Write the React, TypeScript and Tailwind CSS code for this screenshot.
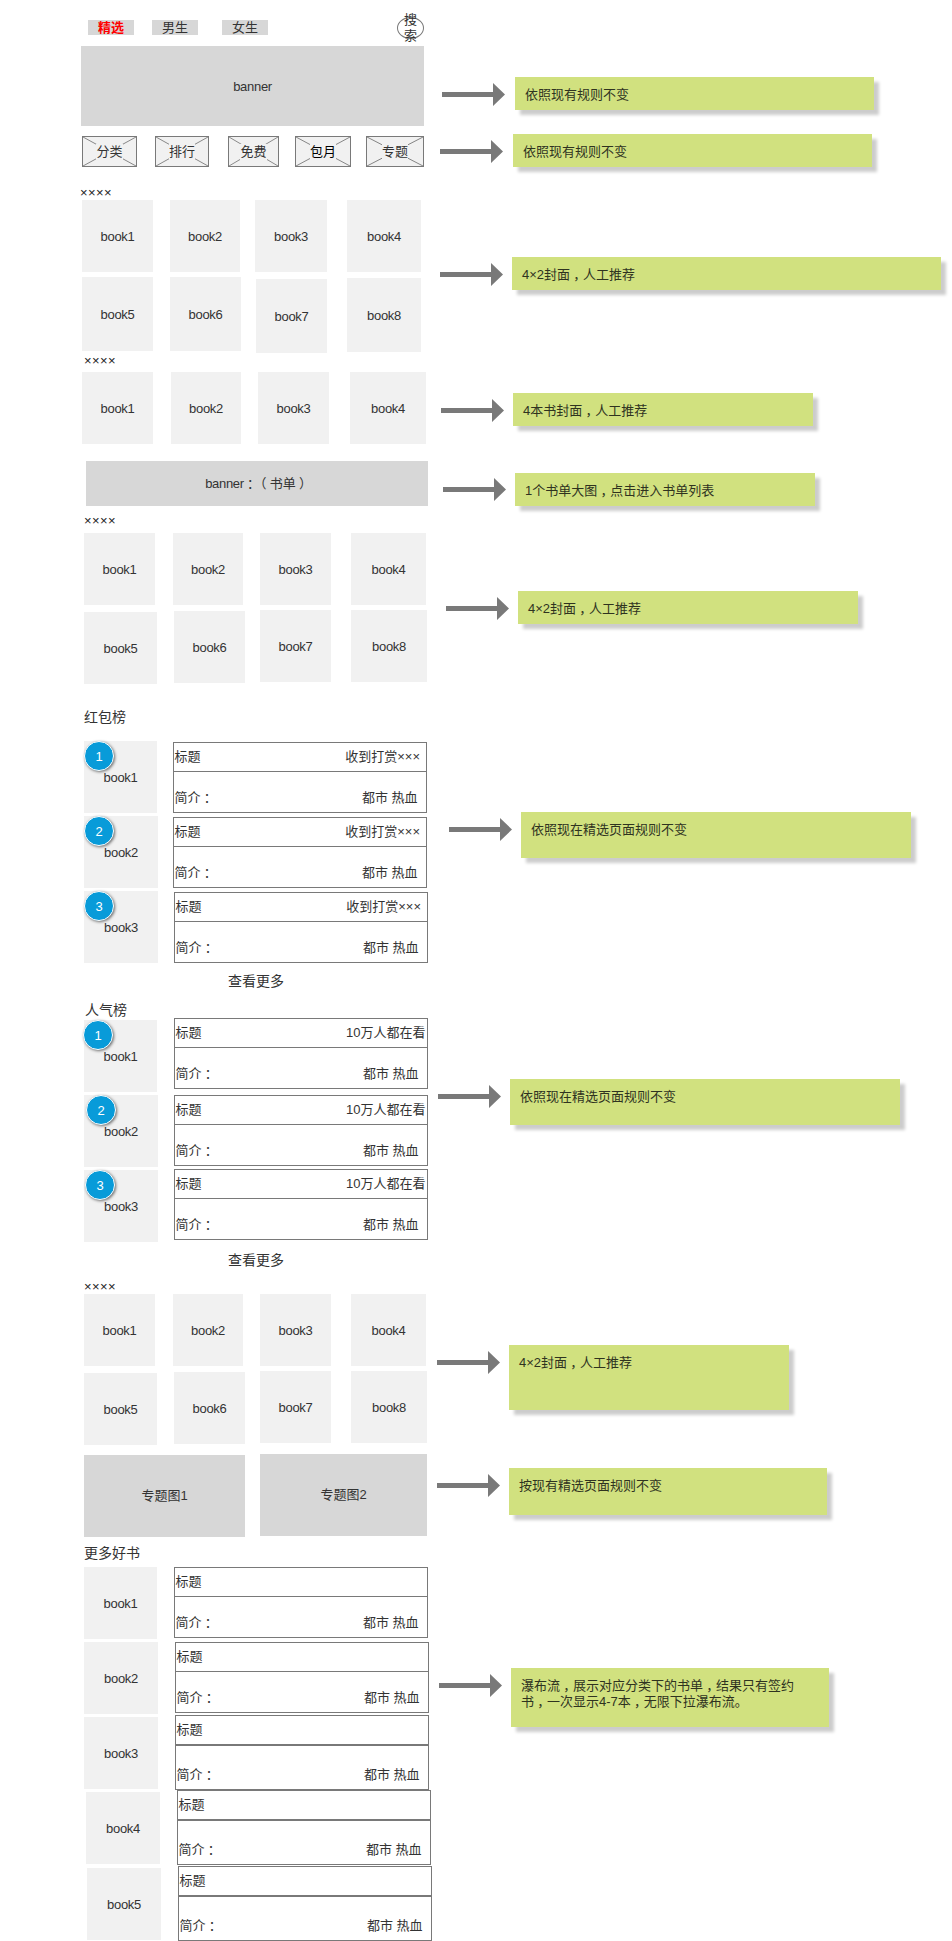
import React from "react";

type Item = { label: string; box: string };

/* Punctuation sits in the middle of its full-width cell. */
function T({ children }: { children: string }) {
  return (
    <>
      {children.split(/([，：（）])/).map((part, i) =>
        /^[，：（）]$/.test(part) ? (
          <span key={i} className="inline-block w-[13px] text-center [font-feature-settings:'halt']">{part}</span>
        ) : (
          <React.Fragment key={i}>{part}</React.Fragment>
        ),
      )}
    </>
  );
}

function Arrow() {
  return (
    <svg width="63" height="23" viewBox="0 0 63 23" className="shrink-0" fill="#797979">
      <path d="M0 9H51V0L63 11.5L51 23V14H0Z" />
    </svg>
  );
}

const notes = [
  { row: "mt-[77px] ml-[5px]", arrow: "mt-[6px] mr-[10px]", box: "w-[359px] h-[33px]", lines: ["依照现有规则不变"] },
  { row: "mt-[24px] ml-[3px]", arrow: "mt-[6px] mr-[10px]", box: "w-[359px] h-[33px]", lines: ["依照现有规则不变"] },
  { row: "mt-[90px] ml-[3px]", arrow: "mt-[6px] mr-[9px]", box: "w-[429px] h-[33px]", lines: ["4×2封面，人工推荐"] },
  { row: "mt-[103px] ml-[4px]", arrow: "mt-[6px] mr-[9px]", box: "w-[300px] h-[33px]", lines: ["4本书封面，人工推荐"] },
  { row: "mt-[47px] ml-[6px]", arrow: "mt-[5px] mr-[9px]", box: "w-[300px] h-[33px]", lines: ["1个书单大图，点击进入书单列表"] },
  { row: "mt-[85px] ml-[9px]", arrow: "mt-[6px] mr-[9px]", box: "w-[340px] h-[33px]", lines: ["4×2封面，人工推荐"] },
  { row: "mt-[188px] ml-[12px]", arrow: "mt-[6px] mr-[9px]", box: "w-[390px] h-[46px]", lines: ["依照现在精选页面规则不变"] },
  { row: "mt-[221px] ml-[1px]", arrow: "mt-[6px] mr-[9px]", box: "w-[390px] h-[46px]", lines: ["依照现在精选页面规则不变"] },
  { row: "mt-[220px] ml-0", arrow: "mt-[6px] mr-[9px]", box: "w-[280px] h-[65px]", lines: ["4×2封面，人工推荐"] },
  { row: "mt-[58px] ml-0", arrow: "mt-[6px] mr-[9px]", box: "w-[318px] h-[47px]", lines: ["按现有精选页面规则不变"] },
  {
    row: "mt-[153px] ml-[2px]",
    arrow: "mt-[6px] mr-[9px]",
    box: "w-[318px] h-[59px]",
    lines: ["瀑布流，展示对应分类下的书单，结果只有签约", "书，一次显示4-7本，无限下拉瀑布流。"],
  },
];

function Notes() {
  return (
    <aside className="flex w-[515px] shrink-0 flex-col">
      {notes.map((n, i) => (
        <div key={i} className={`flex items-start ${n.row}`}>
          <div className={`shrink-0 ${n.arrow}`}><Arrow /></div>
          <div className={`shrink-0 bg-[#d1e17f] pt-[10px] pl-[10px] shadow-[5px_5px_3px_rgba(0,0,0,0.2)] ${n.box}`}>
            {n.lines.map((l) => (
              <p key={l} className="h-4 whitespace-nowrap text-[#2f331f]"><T>{l}</T></p>
            ))}
          </div>
        </div>
      ))}
    </aside>
  );
}

function Books({ items, className }: { items: Item[]; className: string }) {
  return (
    <div className={`flex items-start ${className}`}>
      {items.map((b) => (
        <div key={b.label} className={`flex shrink-0 items-center justify-center bg-[#f1f1f1] pt-[2px] tracking-[-0.3px] ${b.box}`}>{b.label}</div>
      ))}
    </div>
  );
}

function Marks({ className }: { className: string }) {
  return <div className={`h-4 pt-px tracking-[0.4px] text-[#1c1c1c] ${className}`}>××××</div>;
}

const shelfTop: Item[] = [
  { label: "book1", box: "ml-[84px] w-[71px] h-[72px]" },
  { label: "book2", box: "ml-[18px] w-[70px] h-[72px]" },
  { label: "book3", box: "ml-[17px] w-[71px] h-[72px]" },
  { label: "book4", box: "ml-[20px] w-[75px] h-[72px]" },
];
const shelfBottom: Item[] = [
  { label: "book5", box: "ml-[84px] mt-[2px] w-[73px] h-[72px]" },
  { label: "book6", box: "ml-[17px] mt-[1px] w-[71px] h-[72px]" },
  { label: "book7", box: "ml-[15px] w-[71px] h-[72px]" },
  { label: "book8", box: "ml-[20px] w-[76px] h-[72px]" },
];

type Entry = {
  n: string;
  row: string;
  cover: string;
  badge?: string;
  card: string;
  right?: string;
  rightPad?: string;
  tall?: boolean;
};

function EntryRow({ e }: { e: Entry }) {
  return (
    <div className={`flex shrink-0 items-start ${e.row}`}>
      <div className={`relative flex h-[72px] shrink-0 items-center justify-center bg-[#f1f1f1] pt-[2px] tracking-[-0.3px] ${e.cover}`}>
        book{e.n}
        {e.badge && (
          <span className={`absolute top-0 flex size-[30px] items-center justify-center rounded-full border border-white bg-[#089bd9] pt-px text-white shadow-[1px_1px_3px_rgba(0,0,0,0.55)] ${e.badge}`}>
            {e.n}
          </span>
        )}
      </div>
      <div className={`flex w-[254px] shrink-0 flex-col border border-[#797979] ${e.tall ? "h-[75px]" : "h-[71px]"} ${e.card}`}>
        <div className={`flex shrink-0 items-center justify-between border-[#797979] pl-[0.5px] ${e.tall ? "h-[30px] border-b-2" : "h-[29px] border-b"} ${e.rightPad ?? ""}`}>
          <span>标题</span>
          <span>{e.right}</span>
        </div>
        <div className="flex grow items-end justify-between pr-[8.5px] pb-[6px] pl-[0.5px]">
          <span><T>简介：</T></span>
          <span>都市 热血</span>
        </div>
      </div>
    </div>
  );
}

const reward: Entry[] = [
  { n: "1", row: "mt-[16px] h-[72px]", cover: "ml-[84px] w-[73px]", badge: "left-0", card: "ml-[16px] mt-px", right: "收到打赏×××", rightPad: "pr-[6px]" },
  { n: "2", row: "mt-[3px] h-[72px]", cover: "ml-[84px] w-[74px]", badge: "left-0", card: "ml-[15px] mt-px", right: "收到打赏×××", rightPad: "pr-[6px]" },
  { n: "3", row: "mt-[3px] h-[72px]", cover: "ml-[84px] w-[74px]", badge: "left-0", card: "ml-[16px] mt-px", right: "收到打赏×××", rightPad: "pr-[6px]" },
];
const popular: Entry[] = [
  { n: "1", row: "mt-[2px] h-[72px]", cover: "ml-[84px] w-[73px]", badge: "-left-px", card: "ml-[17px] -mt-[2px]", right: "10万人都在看", rightPad: "pr-[1.5px]" },
  { n: "2", row: "mt-[3px] h-[72px]", cover: "ml-[84px] w-[74px]", badge: "left-[2px]", card: "ml-[16px]", right: "10万人都在看", rightPad: "pr-[1.5px]" },
  { n: "3", row: "mt-[3px] h-[72px]", cover: "ml-[84px] w-[74px]", badge: "left-px", card: "ml-[16px] -mt-px", right: "10万人都在看", rightPad: "pr-[1.5px]" },
];
const more: Entry[] = [
  { n: "1", row: "mt-[6px] h-[72px]", cover: "ml-[84px] w-[73px]", card: "ml-[17px]" },
  { n: "2", row: "mt-[3px] h-[72px]", cover: "ml-[84px] w-[74px]", card: "ml-[17px]" },
  { n: "3", row: "mt-[3px] h-[72px]", cover: "ml-[84px] w-[74px]", card: "ml-[17px] -mt-[2px]", tall: true },
  { n: "4", row: "mt-[3px] h-[72px]", cover: "ml-[86px] w-[74px]", card: "ml-[17px] -mt-[2px]", tall: true },
  { n: "5", row: "mt-[4px] h-[72px]", cover: "ml-[87px] w-[74px]", card: "ml-[17px] -mt-[2px]", tall: true },
];

function Placeholder({ label, box, dark }: { label: string; box: string; dark?: boolean }) {
  return (
    <div className={`grid h-[31px] shrink-0 border border-[#797979] bg-[#f1f1f1] ${box}`}>
      <svg className="col-start-1 row-start-1 h-full w-full" preserveAspectRatio="none" viewBox="0 0 54 29" stroke="#797979" strokeWidth="0.9">
        <path d="M0 0L54 29M54 0L0 29" />
      </svg>
      <div className="col-start-1 row-start-1 flex items-center justify-center pt-px">
        <span className={`h-[16px] bg-[#f1f1f1] ${dark ? "text-black" : ""}`}>{label}</span>
      </div>
    </div>
  );
}

export default function App() {
  return (
    <div className="flex h-[1941px] w-[952px] overflow-hidden bg-white font-['Liberation_Sans','Noto_Sans_CJK_SC',sans-serif] text-[13px] leading-4 text-[#333333]">
      <main className="flex w-[437px] shrink-0 flex-col">
        <header className="mt-[16px] flex h-[24px] shrink-0 items-start">
          <div className="mt-[4px] ml-[88px] flex h-[15px] w-[46px] items-center justify-center bg-[#d7d7d7] font-bold text-[#ff0000]">精选</div>
          <div className="mt-[4px] ml-[18px] flex h-[15px] w-[46px] items-center justify-center bg-[#d7d7d7]">男生</div>
          <div className="mt-[4px] ml-[24px] flex h-[15px] w-[46px] items-center justify-center bg-[#d7d7d7]">女生</div>
          <div className="mt-px ml-[129px] flex h-[22px] w-[27px] items-center justify-center rounded-[50%] border border-[#797979]">
            <span className="w-[13px]">搜索</span>
          </div>
        </header>
        <div className="mt-[6px] ml-[81px] flex h-[80px] w-[343px] shrink-0 items-center justify-center bg-[#d7d7d7] pt-[2px] tracking-[-0.3px]">banner</div>
        <nav className="mt-[10px] flex shrink-0">
          <Placeholder label="分类" box="ml-[82px] w-[55px]" />
          <Placeholder label="排行" box="ml-[18px] w-[54px]" />
          <Placeholder label="免费" box="ml-[19px] w-[51px]" />
          <Placeholder label="包月" box="ml-[16px] w-[56px]" dark />
          <Placeholder label="专题" box="ml-[15px] w-[58px]" />
        </nav>

        <Marks className="mt-[17px] ml-[80px]" />
        <Books
          className="h-[72px]"
          items={[
            { label: "book1", box: "ml-[82px] w-[71px] h-[72px]" },
            { label: "book2", box: "ml-[17px] w-[70px] h-[72px]" },
            { label: "book3", box: "ml-[15px] w-[72px] h-[72px]" },
            { label: "book4", box: "ml-[20px] w-[74px] h-[72px]" },
          ]}
        />
        <Books
          className="mt-[5px] h-[76px]"
          items={[
            { label: "book5", box: "ml-[82px] w-[71px] h-[74px]" },
            { label: "book6", box: "ml-[17px] w-[71px] h-[74px]" },
            { label: "book7", box: "ml-[15px] mt-[2px] w-[71px] h-[74px]" },
            { label: "book8", box: "ml-[20px] mt-px w-[74px] h-[74px]" },
          ]}
        />
        <Marks className="-mt-px ml-[84px]" />
        <Books
          className="mt-[4px] h-[72px]"
          items={[
            { label: "book1", box: "ml-[82px] w-[71px] h-[72px]" },
            { label: "book2", box: "ml-[18px] w-[70px] h-[72px]" },
            { label: "book3", box: "ml-[17px] w-[71px] h-[72px]" },
            { label: "book4", box: "ml-[21px] w-[76px] h-[72px]" },
          ]}
        />
        <div className="mt-[17px] ml-[86px] flex h-[45px] w-[342px] shrink-0 items-center justify-center bg-[#d7d7d7]">
          <span><span className="tracking-[-0.3px]">banner</span><T>：（书单）</T></span>
        </div>
        <Marks className="mt-[6px] ml-[84px]" />
        <Books className="mt-[5px] h-[72px]" items={shelfTop} />
        <Books className="mt-[5px] h-[74px]" items={shelfBottom} />

        <h2 className="mt-[25px] ml-[84px] h-4 text-[14px] leading-4">红包榜</h2>
        {reward.map((e) => <EntryRow key={e.n} e={e} />)}
        <div className="mt-[10px] ml-[228px] h-4 text-[14px] leading-4">查看更多</div>

        <h2 className="mt-[13px] ml-[85px] h-4 text-[14px] leading-4">人气榜</h2>
        {popular.map((e) => <EntryRow key={e.n} e={e} />)}
        <div className="mt-[10px] ml-[228px] h-4 text-[14px] leading-4">查看更多</div>

        <Marks className="mt-[10px] ml-[84px]" />
        <Books className="h-[72px]" items={shelfTop} />
        <Books className="mt-[5px] h-[74px]" items={shelfBottom} />

        <div className="mt-[9px] flex h-[83px] shrink-0 items-start">
          <div className="mt-px ml-[84px] flex h-[82px] w-[161px] items-center justify-center bg-[#d7d7d7]">专题图1</div>
          <div className="ml-[15px] flex h-[82px] w-[167px] items-center justify-center bg-[#d7d7d7]">专题图2</div>
        </div>
        <h2 className="mt-[8px] ml-[84px] h-4 text-[14px] leading-4">更多好书</h2>
        {more.map((e) => <EntryRow key={e.n} e={e} />)}
      </main>
      <Notes />
    </div>
  );
}
